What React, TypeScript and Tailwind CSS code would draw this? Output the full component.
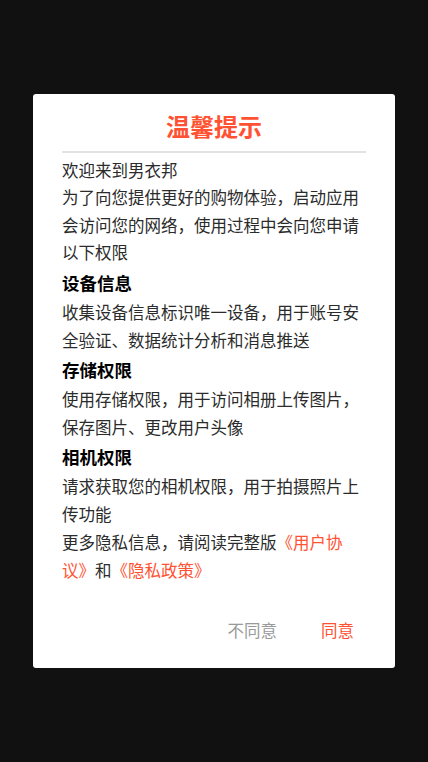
import React from "react";

const sections = [
  {
    title: "设备信息",
    body: "收集设备信息标识唯一设备，用于账号安全验证、数据统计分析和消息推送",
  },
  {
    title: "存储权限",
    body: "使用存储权限，用于访问相册上传图片，保存图片、更改用户头像",
  },
  {
    title: "相机权限",
    body: "请求获取您的相机权限，用于拍摄照片上传功能",
  },
];

export default function App() {
  return (
    <div
      className="flex h-[762px] w-full items-center justify-center bg-[#111111] [text-spacing-trim:space-all]"
      style={{ fontFamily: '"Noto Sans CJK SC", "Noto Sans", sans-serif' }}
    >
      <div className="w-[362px] rounded-[3px] bg-white px-[29px] pt-[16px] pb-[18px]">
        <h2 className="text-center text-[24px] leading-[32px] font-bold text-[#ff5232]">温馨提示</h2>
        <div className="mt-[9px] h-[2px] bg-[#e2e2e2]" />

        <div className="mt-[3.5px] w-[300px] text-[16.5px] text-[#2b2b2b]">
          <p className="leading-[27.5px]">
            欢迎来到男衣邦
            <br />
            为了向您提供更好的购物体验，启动应用会访问您的网络，使用过程中会向您申请以下权限
          </p>

          {sections.map((s) => (
            <div key={s.title}>
              <h3 className="text-[17.5px] leading-[31px] font-bold text-black">{s.title}</h3>
              <p className="leading-[28px]">{s.body}</p>
            </div>
          ))}

          <p className="leading-[28px]">
            <span>更多隐私信息，请阅读完整版</span>
            <span className="text-[#ff5232]">《用户协议》</span>
            <span>和</span>
            <span className="text-[#ff5232]">《隐私政策》</span>
          </p>
        </div>

        <div className="mt-[26.5px] flex justify-end gap-5 text-[16.5px] leading-[24px]">
          <button className="px-3 py-2 text-[#999999]">不同意</button>
          <button className="px-3 py-2 text-[#ff5232]">同意</button>
        </div>
      </div>
    </div>
  );
}
